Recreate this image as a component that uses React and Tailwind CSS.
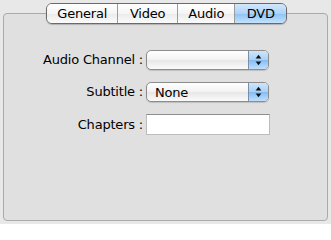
import React from "react";

function Arrows() {
  return (
    <svg width="20" height="18" viewBox="0 0 20 18">
      <path d="M7 7.5 L10 3.5 L13 7.5 Z" fill="#111" />
      <path d="M7 10.5 L10 14.5 L13 10.5 Z" fill="#111" />
    </svg>
  );
}

function Popup({ value }) {
  return (
    <div className="flex h-[20px] w-[123px] rounded-[5px] border border-[#8c8c8c] overflow-hidden shadow-[0_1px_1px_rgba(0,0,0,0.15)] bg-[linear-gradient(to_bottom,#ffffff,#f2f2f2_50%,#e7e7e7_51%,#fafafa)]">
      <div className="flex-1 flex items-center pl-[8px] text-[13px] tracking-[-0.2px] text-black leading-none">{value}</div>
      <div className="w-[20px] border-l border-[#7a8ea8] flex items-center justify-center bg-[linear-gradient(to_bottom,#cfe5fb,#a8d0f6_50%,#82bdf3_51%,#bfe0fd)]">
        <Arrows />
      </div>
    </div>
  );
}

const tabs = [
  { label: "General", w: "w-[71px]" },
  { label: "Video", w: "w-[60px]" },
  { label: "Audio", w: "w-[58px]" },
  { label: "DVD", w: "w-[52px]", sel: true },
];

export default function App() {
  return (
    <div
      className="w-[331px] h-[224px] bg-[#e8e8e8] overflow-hidden pt-[3px]"
      style={{ fontFamily: '"DejaVu Sans", "Liberation Sans", sans-serif' }}
    >
      <div className="relative z-10 ml-[46px] flex w-[241px] h-[21px] rounded-[6px] border border-[#6a6a6a] overflow-hidden shadow-[0_1px_1px_rgba(0,0,0,0.2)]">
        {tabs.map((t, i) => (
          <div
            key={t.label}
            className={
              t.w +
              " flex items-center justify-center text-[13px] tracking-[-0.2px] text-black " +
              (i > 0 ? "border-l border-[#9c9c9c] " : "") +
              (t.sel
                ? "bg-[linear-gradient(to_bottom,#d2e7fb,#aed3f7_50%,#8bc3f5_51%,#c3e2fd)]"
                : "bg-[linear-gradient(to_bottom,#ffffff,#f5f5f5_50%,#ebebeb_51%,#fbfbfb)]")
            }
          >
            {t.label}
          </div>
        ))}
      </div>
      <div className="mx-[3px] -mt-[11px] h-[208px] rounded-[4px] border border-[#aaaaaa] bg-[#e0e0e0] pt-[36px]">
        <div className="grid grid-cols-[139px_124px] gap-x-[3px] gap-y-[12px] items-center">
          <div className="text-right text-[13px] tracking-[-0.2px] text-black">Audio Channel :</div>
          <Popup value="" />
          <div className="text-right text-[13px] tracking-[-0.2px] text-black">Subtitle :</div>
          <Popup value="None" />
          <div className="text-right text-[13px] tracking-[-0.2px] text-black">Chapters :</div>
          <div className="h-[21px] w-[124px] bg-white border border-[#bcbcbc] border-t-[#8e8e8e]"></div>
        </div>
      </div>
    </div>
  );
}
